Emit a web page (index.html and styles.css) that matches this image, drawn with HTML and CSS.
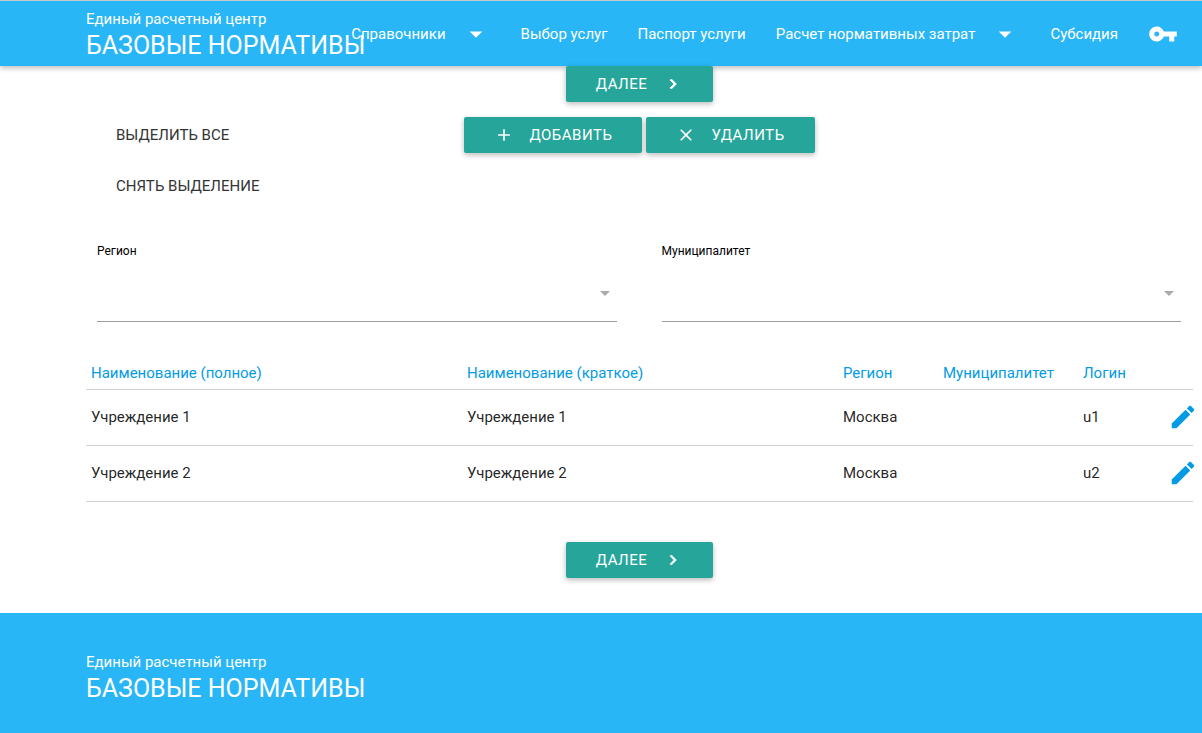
FILE: index.html
```html
<!DOCTYPE html>
<html lang="ru">
<head>
<meta charset="utf-8">
<title>Базовые нормативы</title>
<link rel="stylesheet" href="styles.css">
</head>
<body>
<svg class="sprite" aria-hidden="true">
  <symbol id="drop" viewBox="0 0 24 24"><path d="M7 10l5 5 5-5z"/></symbol>
  <symbol id="key" viewBox="0 0 24 24"><path d="M12.65 10C11.83 7.67 9.61 6 7 6c-3.31 0-6 2.69-6 6s2.69 6 6 6c2.61 0 4.83-1.67 5.65-4H17v4h4v-4h2v-4H12.65zM7 14c-1.1 0-2-.9-2-2s.9-2 2-2 2 .9 2 2-.9 2-2 2z"/></symbol>
  <symbol id="next" viewBox="0 0 24 24"><path d="M10 6L8.59 7.41 13.17 12l-4.58 4.59L10 18l6-6z" stroke="currentColor" stroke-width="1"/></symbol>
  <symbol id="add" viewBox="0 0 24 24"><path d="M19 13h-6v6h-2v-6H5v-2h6V5h2v6h6v2z"/></symbol>
  <symbol id="clear" viewBox="0 0 24 24"><path d="M19 6.41L17.59 5 12 10.59 6.41 5 5 6.41 10.59 12 5 17.59 6.41 19 12 13.41 17.59 19 19 17.59 13.41 12z"/></symbol>
  <symbol id="edit" viewBox="0 0 24 24"><path d="M3 17.25V21h3.75L17.81 9.94l-3.75-3.75L3 17.25zM20.71 7.04c.39-.39.39-1.02 0-1.41l-2.34-2.34c-.39-.39-1.02-.39-1.41 0l-1.83 1.83 3.75 3.75 1.83-1.83z"/></symbol>
</svg>

<header class="header">
  <a class="brand" href="#">
    <span class="brand-org">Единый расчетный центр</span>
    <span class="brand-name">БАЗОВЫЕ НОРМАТИВЫ</span>
  </a>
  <nav class="nav">
    <a class="nav-link" href="#">Справочники<svg class="icon nav-drop"><use href="#drop"/></svg></a>
    <a class="nav-link" href="#">Выбор услуг</a>
    <a class="nav-link" href="#">Паспорт услуги</a>
    <a class="nav-link" href="#">Расчет нормативных затрат<svg class="icon nav-drop"><use href="#drop"/></svg></a>
    <a class="nav-link" href="#">Субсидия</a>
    <a class="nav-link" href="#" aria-label="Вход"><svg class="icon"><use href="#key"/></svg></a>
  </nav>
</header>

<main class="main">
  <div class="center">
    <button class="btn" type="button">ДАЛЕЕ<svg class="icon-small"><use href="#next"/></svg></button>
  </div>

  <div class="toolbar">
    <div class="selection">
      <button class="btn-flat" type="button">ВЫДЕЛИТЬ ВСЕ</button>
      <button class="btn-flat" type="button">СНЯТЬ ВЫДЕЛЕНИЕ</button>
    </div>
    <div class="actions">
      <button class="btn" type="button"><svg class="icon-small"><use href="#add"/></svg>ДОБАВИТЬ</button>
      <button class="btn" type="button"><svg class="icon-small"><use href="#clear"/></svg>УДАЛИТЬ</button>
    </div>
  </div>

  <div class="filters">
    <div class="field">
      <label class="field-label" for="region">Регион</label>
      <div class="field-box">
        <select class="field-select" id="region"><option></option></select>
        <svg class="field-arrow"><use href="#drop"/></svg>
      </div>
    </div>
    <div class="field">
      <label class="field-label" for="municipality">Муниципалитет</label>
      <div class="field-box">
        <select class="field-select" id="municipality"><option></option></select>
        <svg class="field-arrow"><use href="#drop"/></svg>
      </div>
    </div>
  </div>

  <table class="table">
    <colgroup>
      <col class="col-name"><col class="col-name"><col class="col-region"><col class="col-municipality"><col class="col-login"><col class="col-edit">
    </colgroup>
    <thead>
      <tr><th>Наименование (полное)</th><th>Наименование (краткое)</th><th>Регион</th><th>Муниципалитет</th><th>Логин</th><th></th></tr>
    </thead>
    <tbody>
      <tr><td>Учреждение 1</td><td>Учреждение 1</td><td>Москва</td><td></td><td>u1</td><td><a class="edit" href="#" aria-label="Изменить"><svg class="icon"><use href="#edit"/></svg></a></td></tr>
      <tr><td>Учреждение 2</td><td>Учреждение 2</td><td>Москва</td><td></td><td>u2</td><td><a class="edit" href="#" aria-label="Изменить"><svg class="icon"><use href="#edit"/></svg></a></td></tr>
    </tbody>
  </table>

  <div class="center">
    <button class="btn" type="button">ДАЛЕЕ<svg class="icon-small"><use href="#next"/></svg></button>
  </div>
</main>

<footer class="footer">
  <div class="brand">
    <span class="brand-org">Единый расчетный центр</span>
    <span class="brand-name">БАЗОВЫЕ НОРМАТИВЫ</span>
  </div>
</footer>
</body>
</html>
```

FILE: styles.css
```css
* { box-sizing: border-box; }

body {
  display: flex;
  flex-direction: column;
  min-height: 100vh;
  margin: 0;
  background: #fff;
  color: rgba(0, 0, 0, 0.87);
  font: 15px/22px Roboto, "Liberation Sans", sans-serif;
}

a { color: inherit; text-decoration: none; }

.sprite { display: none; }

.icon, .icon-small { display: block; flex: none; fill: currentColor; }
.icon { width: 30px; height: 30px; }
.icon-small { width: 20px; height: 20px; }

.header {
  display: flex;
  align-items: center;
  height: 66px;
  padding: 0 9px 0 86px;
  border-top: 1px solid #c4c8cc;
  background: #29b6f6;
  color: #fff;
  box-shadow: 0 2px 5px rgba(0, 0, 0, 0.16), 0 2px 6px rgba(0, 0, 0, 0.12);
}

.brand { display: block; flex: 1 1 0; min-width: 0; color: #fff; white-space: nowrap; }
.header .brand { padding-top: 3px; }
.brand-org, .brand-name { display: block; }
.brand-org { line-height: 22px; }
.brand-name { font-size: 25px; line-height: 32px; }

.nav { display: flex; flex: none; }
.nav-link { display: flex; align-items: center; height: 65px; padding: 0 15px; }
.nav-drop { margin-left: 15px; }

.main { flex: 1 0 auto; padding: 0 9px 35px 86px; }
.center { display: flex; justify-content: center; }

.btn, .btn-flat {
  display: inline-flex;
  align-items: center;
  gap: 15px;
  height: 36px;
  padding: 0 30px;
  border: 0;
  border-radius: 2px;
  font: inherit;
  cursor: pointer;
}
.btn {
  background: #26a69a;
  color: #fff;
  letter-spacing: 0.5px;
  box-shadow: 0 2px 5px rgba(0, 0, 0, 0.16), 0 2px 6px rgba(0, 0, 0, 0.12);
}
.center .btn { gap: 16px; }
.btn-flat { background: transparent; color: #343434; }

.toolbar { display: grid; grid-template-columns: repeat(3, 1fr); margin-top: 15px; }
.selection { display: flex; flex-direction: column; align-items: flex-start; gap: 15px; }
.actions { display: flex; justify-content: center; align-items: flex-start; gap: 4px; }

.filters { display: grid; grid-template-columns: 1fr 1fr; gap: 45px; margin-top: 38px; padding: 0 12px 0 11px; }
.field-label { display: block; color: #000; font-size: 12px; line-height: 18px; }
.field-box { display: flex; position: relative; }
.field-select {
  width: 100%;
  height: 62px;
  border: 0;
  border-bottom: 1px solid #9e9e9e;
  border-radius: 0;
  background: transparent;
  font: inherit;
  appearance: none;
}
.field-arrow {
  position: absolute;
  top: 21px;
  right: 0;
  width: 24px;
  height: 24px;
  fill: #aaa;
  pointer-events: none;
}

.table { width: 100%; margin: 35px 0 40px; border-collapse: collapse; table-layout: fixed; }
.table th, .table td { padding: 5px; border-bottom: 1px solid #d0d0d0; text-align: left; }
.table th { color: #039be5; font-weight: 400; }
.table td { height: 56px; padding-bottom: 7px; }
.col-region { width: 100px; }
.col-municipality { width: 140px; }
.col-login { width: 85px; }
.col-edit { width: 30px; }
.edit { display: block; color: #039be5; }

.footer { height: 120px; padding: 38px 9px 0 86px; background: #29b6f6; }
```
